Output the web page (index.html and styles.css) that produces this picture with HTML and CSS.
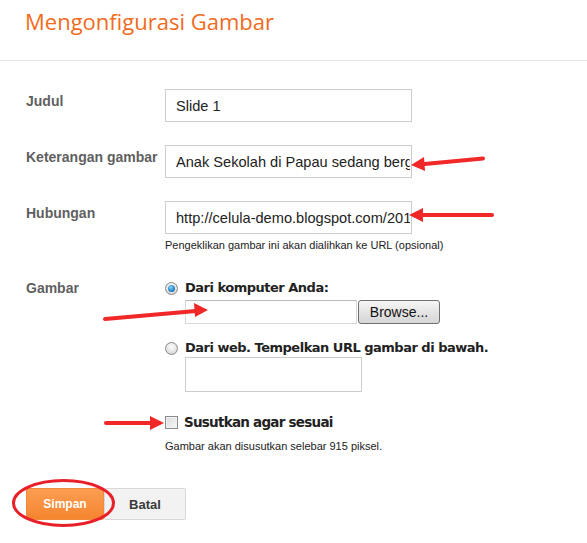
FILE: index.html
```html
<!DOCTYPE html>
<html lang="id">
<head>
<meta charset="utf-8">
<title>Mengonfigurasi Gambar</title>
<link rel="stylesheet" href="styles.css">
</head>
<body>
<div class="page">
  <header class="head">
    <h1 class="title">Mengonfigurasi Gambar</h1>
  </header>
  <form class="form">
    <div class="row">
      <label class="lbl">Judul</label>
      <div class="field"><input class="text" type="text" value="Slide 1" readonly></div>
    </div>
    <div class="row">
      <label class="lbl">Keterangan gambar</label>
      <div class="field"><input class="text" type="text" value="Anak Sekolah di Papau sedang bergembira" readonly></div>
    </div>
    <div class="row">
      <label class="lbl">Hubungan</label>
      <div class="field">
        <input class="text" type="text" value="http://celula-demo.blogspot.com/2014/" readonly>
        <p class="help help-link">Pengeklikan gambar ini akan dialihkan ke URL (opsional)</p>
      </div>
    </div>
    <div class="row row-gambar">
      <label class="lbl">Gambar</label>
      <div class="field">
        <div class="opt"><span class="radio on"></span><span class="opt-text">Dari komputer Anda:</span></div>
        <div class="file"><span class="file-box"></span><span class="browse">Browse...</span></div>
        <div class="opt opt-web"><span class="radio"></span><span class="opt-text">Dari web. Tempelkan URL gambar di bawah.</span></div>
        <div class="url-box"></div>
      </div>
    </div>
    <div class="row row-check">
      <span class="lbl"></span>
      <div class="field">
        <div class="check-row"><span class="check"></span><span class="check-text">Susutkan agar sesuai</span></div>
        <p class="help help-shrink">Gambar akan disusutkan selebar 915 piksel.</p>
      </div>
    </div>
    <div class="actions">
      <button type="button" class="btn btn-primary">Simpan</button>
      <button type="button" class="btn btn-cancel">Batal</button>
    </div>
  </form>
  <svg class="annot" width="587" height="543" viewBox="0 0 587 543" aria-hidden="true">
    <g stroke="#f02828" stroke-width="4" stroke-linecap="round" fill="none">
      <line x1="483" y1="158.5" x2="422" y2="164.2"/>
      <line x1="492" y1="215" x2="421" y2="215"/>
      <line x1="105" y1="319" x2="196" y2="311"/>
      <line x1="106" y1="423" x2="152" y2="423"/>
      <ellipse cx="63.5" cy="503" rx="50" ry="22.5" stroke="#e8202a" stroke-width="3"/>
    </g>
    <g fill="#f02828">
      <polygon points="411,165 424,157 425,171"/>
      <polygon points="409,215 423,208 423,222"/>
      <polygon points="208,310 194,303 195,317"/>
      <polygon points="164,423 150,416 150,430"/>
    </g>
  </svg>
</div>
</body>
</html>
```
FILE: styles.css
```css
* { box-sizing: border-box; }
html, body { margin: 0; padding: 0; background: #fff; }
body { font-family: "Liberation Sans", Arial, sans-serif; color: #222; }

.page { position: relative; width: 587px; height: 543px; overflow: hidden; }

.head {
  height: 61px;
  border-bottom: 1px solid #e5e5e5;
  padding: 6px 0 0 25px;
}
.title {
  margin: 0;
  font-family: "Open Sans", sans-serif;
  font-weight: 400;
  font-size: 22px;
  line-height: 30px;
  color: #f26b1d;
}

.form { padding: 28px 0 0 26px; margin: 0; }

.row { display: flex; align-items: flex-start; margin-bottom: 23px; }
.lbl {
  width: 139px;
  flex: none;
  padding-top: 4px;
  font-size: 14px;
  line-height: 16px;
  font-weight: 700;
  color: #5f5f5f;
  white-space: nowrap;
}
.field { flex: none; }

.text {
  display: block;
  width: 247px;
  height: 33px;
  margin: 0;
  padding: 0 1px 0 10px;
  border: 1px solid #ccc;
  border-radius: 0;
  font-family: "Liberation Sans", Arial, sans-serif;
  font-size: 14.6px;
  color: #222;
  background: #fff;
  outline: none;
}

.help {
  margin: 5px 0 0;
  font-size: 11px;
  line-height: 13px;
  color: #222;
}

.row-gambar { margin-top: 28px; margin-bottom: 0; }
.row-gambar .lbl { padding-top: 0; }

.opt { display: flex; align-items: center; height: 16px; }
.opt-web { margin-top: 16px; }
.radio {
  width: 13px; height: 13px; flex: none;
  border-radius: 50%;
  border: 1px solid #8a8a8a;
  background: radial-gradient(circle at 50% 35%, #fdfdfd 0%, #e2e2e2 60%, #c8c8c8 100%);
  margin-right: 7px;
  position: relative;
}
.radio.on::after {
  content: "";
  position: absolute;
  left: 2px; top: 2px;
  width: 7px; height: 7px;
  border-radius: 50%;
  background: radial-gradient(circle at 40% 35%, #8ad3f5 0%, #2a8ad0 55%, #0f4f8a 100%);
}
.opt-text, .check-text {
  font-family: "DejaVu Sans", Verdana, sans-serif;
  font-weight: 700;
  font-size: 13px;
  letter-spacing: -0.5px;
  line-height: 16px;
  color: #222;
  white-space: nowrap;
}

.file { display: flex; margin: 4px 0 0 20px; height: 24px; }
.file-box {
  width: 172px; height: 24px;
  border: 1px solid #d8d8d8;
  border-top-color: #b9b9b9;
  background: #fff;
}
.browse {
  width: 82px; height: 24px;
  margin-left: 1px;
  border: 1px solid #707070;
  border-radius: 3px;
  background: linear-gradient(#f6f6f6, #e4e4e4 50%, #d6d6d6);
  font-size: 14px;
  line-height: 22px;
  text-align: center;
  color: #111;
}

.url-box {
  width: 177px; height: 35px;
  margin: 1px 0 0 20px;
  border: 1px solid #ccc;
  background: #fff;
}

.row-check { margin-top: 21px; margin-bottom: 0; }
.check-row { display: flex; align-items: center; height: 18px; }
.check {
  width: 13px; height: 13px; flex: none;
  border: 1px solid #8c8c8c;
  background: linear-gradient(135deg, #dcdcdc, #f6f6f6);
  box-shadow: inset 0 0 0 1px #f2f2f2;
  margin-right: 6px;
}
.check-row .check-text { font-size: 13.5px; letter-spacing: -0.75px; line-height: 18px; }
.help-shrink { margin-top: 9px; }

.actions { display: flex; margin-top: 35px; }
.btn {
  height: 32px;
  margin: 0;
  padding: 0;
  border: 1px solid #d9d9d9;
  border-radius: 2px;
  font-family: "Liberation Sans", Arial, sans-serif;
  font-weight: 700;
  font-size: 12px;
  cursor: pointer;
}
.btn-primary {
  width: 78px;
  border-color: #f08a3c;
  background: linear-gradient(#fb9d52, #f5852f);
  color: #fff;
}
.btn-cancel {
  width: 82px;
  background: #f2f2f2;
  color: #3a3a3a;
  font-size: 13px;
}

.annot { position: absolute; left: 0; top: 0; pointer-events: none; }
```
